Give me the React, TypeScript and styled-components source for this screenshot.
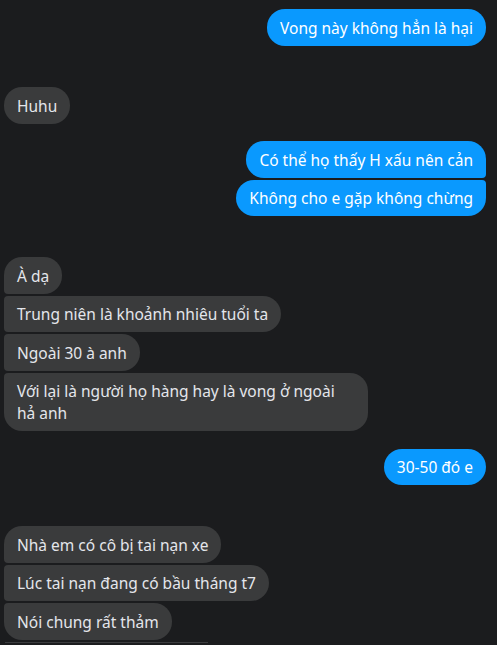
import React from 'react'
import styled, { createGlobalStyle } from "styled-components"

const Global = createGlobalStyle`
  html, body {
    margin: 0;
    padding: 0;
    background: #1b1c1e;
    overflow: hidden;
  }
  body {
    font-family: "Noto Sans", "Open Sans", sans-serif;
  }
`

const Thread = styled.div`
  display: flex;
  flex-direction: column;
  padding: 9px 11px 0 4px;
  height: 645px;
  box-sizing: border-box;
`

interface GroupProps {
  side: "in" | "out"
  mt?: string
}

const Group = styled.div<GroupProps>`
  display: flex;
  flex-direction: column;
  align-items: ${({ side }) => (side === "out" ? "flex-end" : "flex-start")};
  gap: 2px;
  margin-top: ${({ mt = "0" }) => mt};
`

interface BubbleProps {
  side: "in" | "out"
  first: boolean
  last: boolean
}

const Bubble = styled.div<BubbleProps>`
  box-sizing: border-box;
  max-width: 364px;
  padding: 7.5px 13px 7px 13px;
  font-size: 15.5px;
  line-height: 22px;
  background: ${({ side }) => (side === "out" ? "#0a99fe" : "#3a3b3c")};
  color: ${({ side }) => (side === "out" ? "#ffffff" : "#e4e6eb")};
  border-radius: ${({ side, first, last }) =>
    side === "out"
      ? `18px ${first ? "18px" : "4px"} ${last ? "18px" : "4px"} 18px`
      : `${first ? "18px" : "4px"} 18px 18px ${last ? "18px" : "4px"}`};
`

const Divider = styled.div`
  margin-top: 2px;
  width: 203px;
  height: 1px;
  background: #3b3c3e;
  margin-left: 1px;
`

type Msg = { side: "in" | "out"; mt: string; lines: string[] }

const messages: Msg[] = [
  { side: "out", mt: "0", lines: ["Vong này không hẳn là hại"] },
  { side: "in", mt: "41.5px", lines: ["Huhu"] },
  { side: "out", mt: "17.5px", lines: ["Có thể họ thấy H xấu nên cản", "Không cho e gặp không chừng"] },
  {
    side: "in",
    mt: "41px",
    lines: [
      "À dạ",
      "Trung niên là khoảnh nhiêu tuổi ta",
      "Ngoài 30 à anh",
      "Với lại là người họ hàng hay là vong ở ngoài hả anh",
    ],
  },
  { side: "out", mt: "17.5px", lines: ["30-50 đó e"] },
  {
    side: "in",
    mt: "41px",
    lines: ["Nhà em có cô bị tai nạn xe", "Lúc tai nạn đang có bầu tháng t7", "Nói chung rất thảm"],
  },
]

export default function App() {
  return (
    <>
      <Global />
      <Thread>
        {messages.map((m, i) => (
          <Group key={i} side={m.side} mt={m.mt}>
            {m.lines.map((t, j) => (
              <Bubble key={j} side={m.side} first={j === 0} last={j === m.lines.length - 1}>
                {t}
              </Bubble>
            ))}
          </Group>
        ))}
        <Divider />
      </Thread>
    </>
  )
}
